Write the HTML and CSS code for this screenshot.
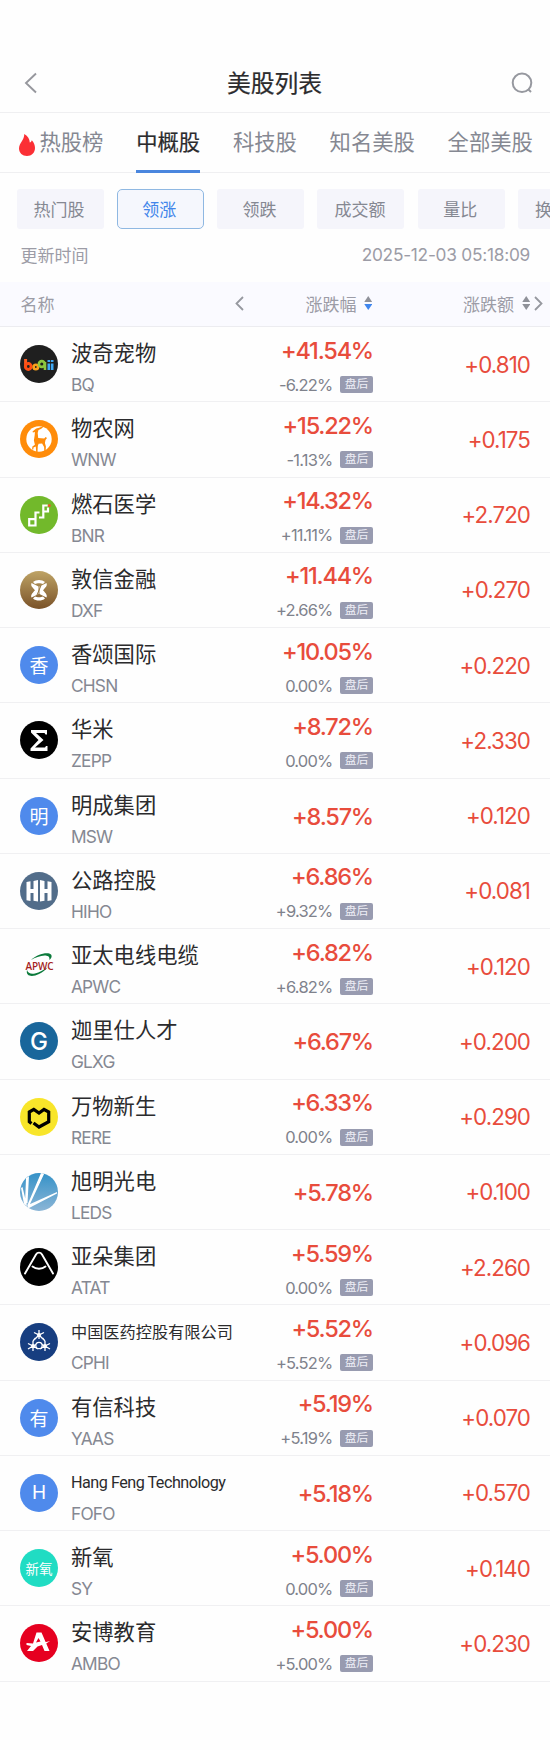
FILE: index.html
```html
<!DOCTYPE html>
<html lang="zh-CN">
<head>
    <meta charset="UTF-8">
    <meta name="viewport" content="width=device-width, initial-scale=1.0">
    <title>美股列表</title>
    <link rel="stylesheet" href="styles.css">
</head>
<body>
    <!-- Title bar -->
    <header class="top">
        <svg class="back" viewBox="0 0 14 22"><path d="M12 1.5L2 11l10 9.5"/></svg>
        <h1>美股列表</h1>
        <svg class="search" viewBox="0 0 22 22"><circle cx="11" cy="10.8" r="9.3"/><path d="M17 17l3 3"/></svg>
    </header>

    <!-- Market tabs -->
    <nav class="tabs">
        <a><svg class="fire" viewBox="0 0 16 22"><path d="M5.3 0C9 2 10.6 5 10.8 8.600c1-.4 1.700-1.200 2-2.400C15 8.500 16 11 16 14c0 4.800-3.500 8-8 8s-8-3-8-7.500c0-3 1.500-5 3-7.500C4.200 5 5.200 3 5.300 0z"/></svg>热股榜</a>
        <a class="on">中概股</a>
        <a>科技股</a>
        <a>知名美股</a>
        <a>全部美股</a>
    </nav>

    <!-- Sort filters -->
    <div class="chips">
        <button>热门股</button>
        <button class="on">领涨</button>
        <button>领跌</button>
        <button>成交额</button>
        <button>量比</button>
        <button>换手率</button>
    </div>

    <div class="upd">
        <span>更新时间</span>
        <span class="time">2025-12-03 05:18:09</span>
    </div>

    <div class="th">
        <span class="c1">名称</span>
        <svg class="chev" viewBox="0 0 9 15"><path d="M8 1L1.500 7.500 8 14"/></svg>
        <span class="c2">涨跌幅<svg class="sort down" viewBox="0 0 8 14"><path d="M4 0l4 6H0z"/><path d="M0 8h8l-4 6z"/></svg></span>
        <span class="c3">涨跌额<svg class="sort" viewBox="0 0 8 14"><path d="M4 0l4 6H0z"/><path d="M0 8h8l-4 6z"/></svg></span>
        <svg class="chev next" viewBox="0 0 9 15"><path d="M1 1l6.500 6.500L1 14"/></svg>
    </div>

    <main id="list"></main>

    <script>
        // logos are drawn on a 38x38 canvas, clipped to a circle
        const logos = {
            BQ: `<rect width="38" height="38" fill="#1f1f1f"/>
                <g fill="none" stroke-width="2.600">
                <path d="M5.600 14v7.500" stroke="#ff5a1f" stroke-width="3"/><circle cx="8.300" cy="21.500" r="2.900" stroke="#ff4e14" stroke-width="3"/>
                <circle cx="15.800" cy="22" r="2.200" stroke="#f9a01b"/>
                <circle cx="21.800" cy="19" r="2.900" stroke="#8cc63f"/><path d="M25 17v8" stroke="#8cc63f"/>
                <path d="M28.800 18.500V25M32.200 18.500V25M28.800 15v2M32.200 15v2" stroke="#3fa9f5"/></g>`,
            WNW: `<rect width="38" height="38" fill="#ff8c0a"/><circle cx="19" cy="19" r="12.700" fill="#fff"/>
                <path fill="#ff8c0a" d="M12.500 11.500l3-2.500c2-1.500 5-1 8.500-3.500-1.500 3-4 4-5.500 4.500l-.8 3 .5 5 6 .5 1.500-1.500 1.300 1-1.500 2-.6 3 1 3.500-.3 5h-1.300l-.2-4.500-2-3.500-3.500.3-.8 2.200-.3 6h-1.300l-.4-5.500-2.300 1-.2 2h-1.200l.3-3 2.500-1.700-1-4.300.8-5.500.2-3-2 .5z"/>`,
            BNR: `<rect width="38" height="38" fill="#72b92b"/>
                <path fill="none" stroke="#fff" stroke-width="2.200" d="M19.500 16.500h-4v13H9.200v-6.300h6.300M19 21.500h4.300V9.500h4.500M23.300 15.500H28v-4"/>
                <circle cx="29.300" cy="9.500" r="1.500" fill="#e8592b"/>`,
            DXF: `<defs><linearGradient id="g1" x2="0" y2="1"><stop stop-color="#bea365"/><stop offset="1" stop-color="#7a5228"/></linearGradient></defs>
                <rect width="38" height="38" fill="url(#g1)"/>
                <path fill="#fff" d="M13 11c3-2.700 9-2.700 12 0l-2 2c-2-1-6-1-8 0zM13 27.500c3 2.700 9 2.700 12 0l-2-2c-2 1-6 1-8 0zM11.500 12l7 3.500v7.500l-7 3.500c-.8-2.500 0-3.500 3.500-7.300-3.500-3.700-4.300-4.700-3.500-7.200zM26.500 12l-7 3.500v7.500l7 3.500c.8-2.500 0-3.500-3.500-7.300 3.500-3.700 4.300-4.700 3.500-7.200z"/>
                <path fill="none" stroke="#97763f" stroke-width="1" d="M21 14.500l-4 9.500"/>`,
            ZEPP: `<rect width="38" height="38" fill="#000"/><path fill="#fff" d="M11 9h16v4.500h-1.500l-1-1.500H16l7.500 7-8.500 7.500h10l1-1.500h1.500V30H10.500v-2.500L18.500 19 11 11.500z"/>`,
            HIHO: `<rect width="38" height="38" fill="#526d8a"/><path fill="#fff" d="M6.500 10l4-.8v7.800h3V9l4.500-1v21.500l-4.500-.8V21h-3v8l-4-.8zM20 8l4.500 1v8h3V9.200l4 .8v18.200l-4 .8v-8h-3v7.700l-4.500.8z"/>`,
            APWC: `<path fill="#0b7a3b" d="M11 13c6-6 17-8.500 20-5.500 1.500 2 0 4-1.500 5.500 0-2 0-4-3-4.300-5-.7-11 1.800-15.500 4.300zM7 23c-1.500 7 6 7 12 4 4-2 7-4.500 8.500-6.500-4 2.500-8 5-12.500 6-4 .8-7-.2-8-3.500z"/>
                <text class="apwc" x="5.500" y="22.500" textLength="28">APWC</text>`,
            RERE: `<rect width="38" height="38" fill="#f8e52a"/><path fill="none" stroke="#000" stroke-width="3.200" d="M11.500 25.500l-2.200-1.800V14l4.500-2.600L19 15l5-3.600 4.700 2.600v9.700L19 29l-5.500-4"/>`,
            LEDS: `<defs><linearGradient id="g2" x2="0" y2="1"><stop stop-color="#3592c8"/><stop offset="1" stop-color="#8bb5d6"/></linearGradient></defs>
                <rect width="38" height="38" fill="url(#g2)"/>
                <path fill="#fff" d="M6 5l3-2L7.500 30 5 31zM21 0h3.500L10 31l-3 2zM8 32l29-13v1.500L11 34l-4 2zM1 15l1.500-1L7 33l-3-2z"/>`,
            ATAT: `<rect width="38" height="38" fill="#000"/><path fill="none" stroke="#fff" stroke-width="1.900" stroke-linecap="round" d="M5 25.500L16 6.500c1.500-2.500 4.500-2.500 6 0l11 19M12.500 18.500c3.500 3 9.500 3 13 0"/>`,
            CPHI: `<rect width="38" height="38" fill="#173e80"/>
                <g fill="none" stroke="#fff" stroke-width="1.300"><path d="M19 7v9M14 9.500l5 2.500 5-2.500M15 16l4-4 4 4"/>
                <path d="M13 18v10M8 20.500l5 2.500 5 3M8 26l5-3 3-1.500M25 18v10M30 20.500l-5 2.500-5 3M30 26l-5-3-3-1.500"/><path d="M13 18l2.500-3M25 18l-2.500-3"/><circle cx="19" cy="22.500" r="3.200"/></g>
                <g fill="#fff"><circle cx="19" cy="12" r="2"/><circle cx="13" cy="23" r="2"/><circle cx="25" cy="23" r="2"/></g>`,
            SY: `<rect width="38" height="38" fill="#20dcc3"/><text x="5.500" y="24.500" font-size="13.500" textLength="27" fill="#fff">新氧</text>`,
            AMBO: `<rect width="38" height="38" fill="#e60020"/><path fill="#fff" d="M16.500 8.500h5l8 18.500h-5l-2.500-6-4.500 1.500-4.500 4.500H7l4-5-4.500-1v-2l6.500.5zM18.500 14l-2.500 4.500 4.500-1zM24 18.500l6-1.500-4.500 3z"/>`
        };

        const stocks = [
            { name: "波奇宠物", code: "BQ", pct: "+41.54%", after: "-6.22%", chg: "+0.810" },
            { name: "物农网", code: "WNW", pct: "+15.22%", after: "-1.13%", chg: "+0.175" },
            { name: "燃石医学", code: "BNR", pct: "+14.32%", after: "+11.11%", chg: "+2.720" },
            { name: "敦信金融", code: "DXF", pct: "+11.44%", after: "+2.66%", chg: "+0.270" },
            { name: "香颂国际", code: "CHSN", pct: "+10.05%", after: "0.00%", chg: "+0.220", letter: "香" },
            { name: "华米", code: "ZEPP", pct: "+8.72%", after: "0.00%", chg: "+2.330" },
            { name: "明成集团", code: "MSW", pct: "+8.57%", chg: "+0.120", letter: "明" },
            { name: "公路控股", code: "HIHO", pct: "+6.86%", after: "+9.32%", chg: "+0.081" },
            { name: "亚太电线电缆", code: "APWC", pct: "+6.82%", after: "+6.82%", chg: "+0.120" },
            { name: "迦里仕人才", code: "GLXG", pct: "+6.67%", chg: "+0.200", letter: "G", cls: "teal" },
            { name: "万物新生", code: "RERE", pct: "+6.33%", after: "0.00%", chg: "+0.290" },
            { name: "旭明光电", code: "LEDS", pct: "+5.78%", chg: "+0.100" },
            { name: "亚朵集团", code: "ATAT", pct: "+5.59%", after: "0.00%", chg: "+2.260" },
            { name: "中国医药控股有限公司", code: "CPHI", pct: "+5.52%", after: "+5.52%", chg: "+0.096", small: "small" },
            { name: "有信科技", code: "YAAS", pct: "+5.19%", after: "+5.19%", chg: "+0.070", letter: "有" },
            { name: "Hang Feng Technology", code: "FOFO", pct: "+5.18%", chg: "+0.570", letter: "H", small: "small en" },
            { name: "新氧", code: "SY", pct: "+5.00%", after: "0.00%", chg: "+0.140" },
            { name: "安博教育", code: "AMBO", pct: "+5.00%", after: "+5.00%", chg: "+0.230" }
        ];

        document.getElementById("list").innerHTML = stocks.map(s => `
            <div class="row">
                <div class="logo ${s.letter ? "txt" : ""} ${s.cls || ""}">${s.letter || `<svg viewBox="0 0 38 38">${logos[s.code]}</svg>`}</div>
                <div class="nm">
                    <div class="name ${s.small || ""}">${s.name}</div>
                    <div class="code">${s.code}</div>
                </div>
                <div class="pc">
                    <div class="pct">${s.pct}</div>
                    ${s.after ? `<div class="after">${s.after}<span class="tag">盘后</span></div>` : ""}
                </div>
                <div class="chg">${s.chg}</div>
            </div>`).join("");
    </script>
</body>
</html>
```
FILE: styles.css
```css
* {
    box-sizing: border-box;
}
body {
    margin: 0;
    background-color: #fefefe;
    color: #2b2b2d;
    font-family: Inter, "Noto Sans CJK SC", sans-serif;
    overflow: hidden;
}
svg {
    display: block;
    flex: none;
}
.top {
    display: flex;
    align-items: center;
    justify-content: space-between;
    height: 113px;
    padding: 53px 17px 0 24px;
    border-bottom: 1px solid #efeff1;
}
.top h1 {
    margin: 0;
    padding-bottom: 2px;
    font-size: 23.8px;
    font-weight: 400;
    -webkit-text-stroke: 0.2px #2b2b2d;
}
.back {
    width: 14px;
    height: 22px;
    fill: none;
    stroke: #96979d;
    stroke-width: 1.9;
}
.search {
    width: 22px;
    height: 22px;
    fill: none;
    stroke: #96989f;
    stroke-width: 2;
}
.tabs {
    display: flex;
    gap: 32.8px;
    height: 60px;
    padding-left: 18.5px;
    border-bottom: 1px solid #efeff1;
    white-space: nowrap;
}
.tabs a {
    display: flex;
    align-items: center;
    height: 60px;
    padding-bottom: 2px;
    font-size: 21.3px;
    color: #858892;
    border-bottom: 3px solid transparent;
}
.tabs a.on {
    color: #2b2b2d;
    -webkit-text-stroke: 0.2px #2b2b2d;
    border-color: #4a86de;
}
.fire {
    width: 16px;
    height: 22px;
    margin: 8px 5px 0 0;
    fill: #fb2f35;
}
.chips {
    display: flex;
    gap: 13.3px;
    padding: 16px 0 0 16.5px;
    overflow: hidden;
}
.chips button {
    flex: none;
    width: 87px;
    height: 40px;
    padding: 0 2px 2px 0;
    border: none;
    border-radius: 3px;
    background-color: #f5f5fb;
    color: #858892;
    font-family: inherit;
    font-size: 17px;
}
.chips button.on {
    border: 1px solid #8fb8e2;
    border-radius: 5px;
    background-color: #f5f7fd;
    color: #4285ea;
}
.upd {
    display: flex;
    align-items: center;
    justify-content: space-between;
    height: 53px;
    padding: 0 20px 2px 20.5px;
    font-size: 17px;
    color: #9c9ca6;
}
.time {
    font-size: 17.3px;
    letter-spacing: -0.25px;
}
.th {
    display: flex;
    align-items: center;
    height: 45px;
    padding: 0 7px 2px 20.5px;
    background-color: #fafaff;
    border-bottom: 1px solid #ececf0;
    font-size: 17px;
    color: #9c9ca6;
}
.c1 {
    width: 215px;
}
.chev {
    width: 9px;
    height: 15px;
    fill: none;
    stroke: #96989f;
    stroke-width: 1.8;
}
.c2, .c3 {
    display: flex;
    align-items: center;
    justify-content: flex-end;
    gap: 7.5px;
}
.c2 {
    width: 129px;
}
.c3 {
    width: 158px;
}
.next {
    margin-left: 4px;
}
.sort {
    width: 8.5px;
    height: 14px;
    fill: #8f9199;
}
.sort.down path:last-child {
    fill: #3f86ee;
}
.row {
    display: flex;
    align-items: center;
    height: 75.25px;
    padding: 0 20px;
    border-bottom: 1px solid #f0f0f2;
}
.logo {
    display: flex;
    align-items: center;
    justify-content: center;
    width: 38px;
    height: 38px;
    border-radius: 50%;
    overflow: hidden;
    color: #fff;
    font-size: 19px;
}
.logo svg {
    width: 38px;
    height: 38px;
}
.logo.txt {
    padding-bottom: 1px;
    background-color: #4f8aec;
}
.logo.teal {
    padding: 0;
    background-color: #19669b;
    font-size: 24px;
    font-weight: 500;
}
.apwc {
    font-family: "Open Sans", sans-serif;
    font-size: 10px;
    font-weight: 600;
    fill: #a51e22;
}
.nm {
    width: 180px;
    margin-left: 13px;
    padding-top: 9px;
    white-space: nowrap;
}
.name {
    height: 32px;
    line-height: 32px;
    font-size: 21.3px;
}
.name.small {
    line-height: 34px;
    font-size: 16.2px;
}
.name.en {
    font-family: Roboto, sans-serif;
    letter-spacing: -0.5px;
}
.code {
    height: 31px;
    line-height: 31px;
    font-size: 17.3px;
    letter-spacing: -0.8px;
    color: #858892;
}
.pc {
    width: 122px;
    text-align: right;
}
.pct {
    height: 34px;
    line-height: 36px;
    font-size: 23.5px;
    font-weight: 500;
    letter-spacing: -1.2px;
    color: #e84c3c;
}
.pct:not(:last-child) {
    padding-top: 4px;
    height: 41px;
}
.after {
    display: flex;
    align-items: center;
    justify-content: flex-end;
    height: 30px;
    font-size: 16.5px;
    letter-spacing: -0.8px;
    color: #7f828c;
}
.tag {
    width: 33px;
    height: 17px;
    margin-left: 7.5px;
    border-radius: 2px;
    background-color: #989bb0;
    color: #eeeef6;
    font-size: 11.8px;
    line-height: 17px;
    letter-spacing: 0;
    text-align: center;
}
.chg {
    flex: 1;
    font-size: 22.3px;
    letter-spacing: -0.9px;
    text-align: right;
    color: #e84c3c;
}
```
